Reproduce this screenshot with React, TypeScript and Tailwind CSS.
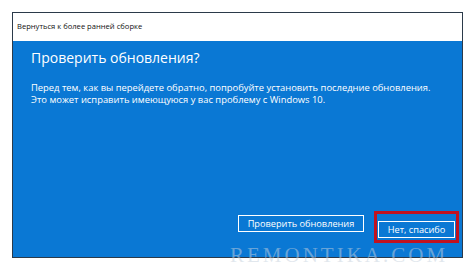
import React from 'react';

export default function App() {
  return (
    <div className="relative w-[474px] h-[270px] bg-white pt-[12px] pl-[12px] overflow-hidden" style={{ fontFamily: '"Open Sans", "Liberation Sans", sans-serif' }}>
      <div className="w-[451px] h-[246px] border border-[#2b3a4a] flex flex-col">
        <div className="h-[28px] bg-white flex items-center px-[4px] text-[7.6px] text-[#111]">
          Вернуться к более ранней сборке
        </div>
        <div className="flex-1 bg-[#0a78d4] flex flex-col pl-[18px] pr-[7px] text-white">
          <h1 className="mt-[7px] text-[14px] leading-[20px] font-normal">Проверить обновления?</h1>
          <p className="mt-[14px] text-[9.4px] leading-[12px]">
            Перед тем, как вы перейдете обратно, попробуйте установить последние обновления.
            <br />
            Это может исправить имеющуюся у вас проблему с Windows 10.
          </p>
          <div className="mt-auto mb-[18px] flex justify-end gap-[14px]">
            <button className="w-[126px] h-[17px] border-[1.5px] border-white text-[9.2px] leading-none text-white">
              Проверить обновления
            </button>
            <div className="border-[3px] border-[#c1121f] p-[1px] -m-[4px]">
              <button className="w-[77px] h-[17px] border-[1.5px] border-white text-[9.2px] leading-none text-white">
                Нет, спасибо
              </button>
            </div>
          </div>
        </div>
      </div>
      <div className="absolute left-[230px] top-[240px] text-[21px] tracking-[3px] text-[#c4d0dc]/50 select-none whitespace-nowrap" style={{ fontFamily: '"Liberation Serif", serif' }}>
        REMONTIKA.COM
      </div>
    </div>
  );
}
